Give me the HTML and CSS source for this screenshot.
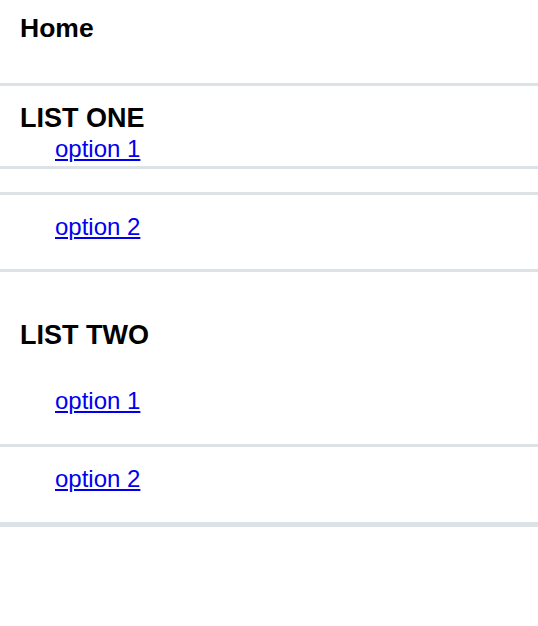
FILE: index.html
```html
<!DOCTYPE html>
<html lang="en">
<head>
<meta charset="utf-8">
<title>Menu</title>
<link rel="stylesheet" href="styles.css">
</head>
<body>
<nav class="menu">
  <div class="home">Home</div>
  <section class="group group-one">
    <h2 class="group-title">LIST ONE</h2>
    <ul class="options">
      <li class="option first"><a href="#">option 1</a></li>
      <li class="option spacer"></li>
      <li class="option"><a href="#">option 2</a></li>
    </ul>
  </section>
  <section class="group group-two">
    <h2 class="group-title">LIST TWO</h2>
    <ul class="options last-list">
      <li class="option lead"><a href="#">option 1</a></li>
      <li class="option tail"><a href="#">option 2</a></li>
    </ul>
  </section>
</nav>
</body>
</html>
```
FILE: styles.css
```css
html, body {
  margin: 0;
  padding: 0;
  background: #ffffff;
}

body {
  font-family: "Liberation Sans", Arial, sans-serif;
  color: #000000;
}

.menu {
  display: flex;
  flex-direction: column;
}

.home {
  font-size: 26.5px;
  line-height: 30px;
  font-weight: bold;
  padding: 13px 20px 40px;
  border-bottom: 3px solid #dde2e7;
}

.group-title {
  margin: 0;
  padding: 0 20px;
  font-size: 27px;
  line-height: 30px;
  font-weight: bold;
}

.group-one .group-title {
  margin-top: 17px;
}

.group-two .group-title {
  margin-top: 48px;
}

.options {
  list-style: none;
  margin: 0;
  padding: 0;
}

.option {
  font-size: 24px;
  line-height: 28px;
  padding: 18px 55px 28px;
  border-bottom: 3px solid #dde2e7;
}

.option a {
  color: #0000ee;
  text-decoration: underline;
}

.option.first {
  padding-top: 2px;
  padding-bottom: 3px;
}

.option.spacer {
  padding: 0;
  height: 23px;
}

.option.lead {
  padding-top: 37px;
  padding-bottom: 29px;
}

.option.tail {
  padding-bottom: 29px;
}

.last-list {
  border-bottom: 2px solid #dde2e7;
}
```
